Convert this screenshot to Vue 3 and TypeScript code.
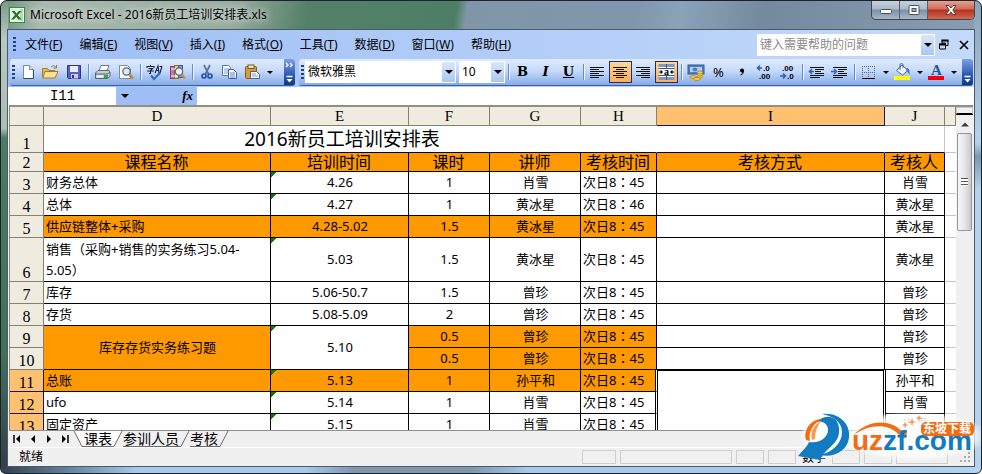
<script setup lang="ts">
import { ref } from 'vue'

interface Cell {
  text: string
  kind: string
  fill?: boolean
  flag?: boolean
  rows?: number
}

interface Row {
  n: number
  cells: Cell[]
  tall?: boolean
}

const menus: [string, string][] = [
  ['文件', 'F'], ['编辑', 'E'], ['视图', 'V'], ['插入', 'I'], ['格式', 'O'],
  ['工具', 'T'], ['数据', 'D'], ['窗口', 'W'], ['帮助', 'H'],
]

const columns = ['D', 'E', 'F', 'G', 'H', 'I', 'J']
const headings = ['课程名称', '培训时间', '课时', '讲师', '考核时间', '考核方式', '考核人']

function line(n: number, topic: string, date: string, hours: string, who: string, exam: string, fill = false, flag = true): Row {
  return {
    n,
    tall: n === 6,
    cells: [
      { text: topic, kind: 'left', fill },
      { text: date, kind: 'mid', fill, flag },
      { text: hours, kind: 'mid', fill },
      { text: who, kind: 'mid', fill },
      { text: exam, kind: n > 10 ? 'exam beside' : 'exam', fill },
      ...(n < 11 ? [{ text: '', kind: 'mid' }] : n === 11 ? [{ text: '', kind: 'active', rows: 3 }] : []),
      { text: who, kind: n > 10 ? 'mid after' : 'mid' },
    ],
  }
}

const rows: Row[] = [
  line(3, '财务总体', '4.26', '1', '肖雪', '次日8：45'),
  line(4, '总体', '4.27', '1', '黄冰星', '次日8：46'),
  line(5, '供应链整体+采购', '4.28-5.02', '1.5', '黄冰星', '次日8：45', true, false),
  line(6, '销售（采购+销售的实务练习5.04-5.05）', '5.03', '1.5', '黄冰星', '次日8：45'),
  line(7, '库存', '5.06-50.7', '1.5', '曾珍', '次日8：45', false, false),
  line(8, '存货', '5.08-5.09', '2', '曾珍', '次日8：45', false, false),
  {
    n: 9,
    cells: [
      { text: '库存存货实务练习题', kind: 'mid', fill: true, rows: 2 },
      { text: '5.10', kind: 'mid', flag: true, rows: 2 },
      { text: '0.5', kind: 'mid', fill: true },
      { text: '曾珍', kind: 'mid', fill: true },
      { text: '次日8：45', kind: 'exam', fill: true },
      { text: '', kind: 'mid' },
      { text: '曾珍', kind: 'mid' },
    ],
  },
  {
    n: 10,
    cells: [
      { text: '0.5', kind: 'mid', fill: true },
      { text: '曾珍', kind: 'mid', fill: true },
      { text: '次日8：45', kind: 'exam', fill: true },
      { text: '', kind: 'mid' },
      { text: '曾珍', kind: 'mid' },
    ],
  },
  line(11, '总账', '5.13', '1', '孙平和', '次日8：45', true),
  line(12, 'ufo', '5.14', '1', '肖雪', '次日8：45'),
  line(13, '固定资产', '5.15', '1', '肖雪', '次日8：45'),
]

// Full-width punctuation is split off so that it can be centred in its square.
const parts = (text: string): string[] => text.split(/([（）：])/).filter(Boolean)
const isMark = (part: string): boolean => '（）：'.includes(part)

const sheets = ['课表', '参训人员', '考核']
const activeSheet = ref(0)
const address = ref('I11')
const formula = ref('')
const question = ref('')
const font = ref('微软雅黑')
const size = ref('10')
const panes = ['a', 'b', 'c', 'c', 'n', 'c', 'c', 'd']
</script>

<template>
  <div class="window">
    <header class="title">
      <svg class="logo" width="16" height="16" viewBox="0 0 16 16">
        <rect x=".5" y=".5" width="15" height="15" fill="#e8f5e4" stroke="#3c8a3c" />
        <rect x="11" y="2" width="3" height="12" fill="#b9d9b4" />
        <path d="M2.5 4h3.200l1.800 2.600L9.800 4h2.800L8.900 8.200l3.800 4.300H9.400L7.300 9.900 4.900 12.500H2l4-4.400z" fill="#1d7a2a" />
      </svg>
      <h1>Microsoft Excel - 2016新员工培训安排表.xls</h1>
      <div class="caption">
        <button aria-label="最小化">
          <svg width="14" height="10"><rect x="1.500" y="4.500" width="11" height="4" rx="1" fill="#fff" stroke="#48525f" /></svg>
        </button>
        <button aria-label="还原">
          <svg width="14" height="12"><rect x="2" y="1.500" width="10" height="9" rx="1" fill="#fff" stroke="#48525f" /><rect x="5" y="4.500" width="4" height="3" fill="#9fb0c2" stroke="#48525f" /></svg>
        </button>
        <button class="shut" aria-label="关闭">
          <svg width="14" height="12"><path d="M2 1.500h3l2 2.500 2-2.500h3L8.800 6l3.200 4.500H9L7 8l-2 2.500H2L5.200 6z" fill="#fff" stroke="#5a3433" /></svg>
        </button>
      </div>
    </header>

    <main class="body">
      <nav class="menu">
        <span class="grip"></span>
        <button v-for="m in menus" :key="m[1]">{{ m[0] }}(<u>{{ m[1] }}</u>)</button>
        <div class="ask">
          <input v-model="question" aria-label="帮助" placeholder="键入需要帮助的问题" />
          <button class="drop" aria-label="展开"><i class="caret"></i></button>
        </div>
        <button class="mini" aria-label="还原窗口">
          <svg width="12" height="12"><path d="M4 1.500h6v5H7.500V4H4zM1.500 5h6v5h-6z" fill="none" stroke="#000" /><path d="M3.500 1.500h7M1 5.500h7" stroke="#000" stroke-width="2" /></svg>
        </button>
        <button class="mini" aria-label="关闭窗口">
          <svg width="12" height="12"><path d="M2 2l8 8M10 2l-8 8" stroke="#000" stroke-width="1.600" /></svg>
        </button>
      </nav>

      <div class="bars">
        <div class="bar">
          <span class="grip"></span>
          <button aria-label="新建"><svg width="16" height="16"><path d="M3.500 1.500h6l4 4v9h-10z" fill="#fff" stroke="#7a8cae" /><path d="M9.500 1.500v4h4" fill="#d4dff3" stroke="#7a8cae" /><path d="M13.500 6v8.500h-10" fill="none" stroke="#33476e" /></svg></button>
          <button aria-label="打开"><svg width="17" height="16"><path d="M.500 13.500v-9h5l1.500 2h6v7z" fill="#e9b75a" stroke="#a77b27" /><path d="M3 7.500h13l-3 6.500H.800z" fill="#ffe394" stroke="#a77b27" /><path d="M9 3c2-2 4-1.500 5 .500M14.500 1v3h-3" fill="none" stroke="#8a7a3a" /></svg></button>
          <button aria-label="保存"><svg width="16" height="16"><path d="M1.500 1.500h13v13h-12l-1-1z" fill="#5d5fc0" stroke="#32347f" /><rect x="4" y="2" width="8" height="6" fill="#e9eefc" /><rect x="5" y="10" width="7" height="4.500" fill="#c9cbe9" /><rect x="6" y="11" width="2" height="3" fill="#32347f" /></svg></button>
          <i class="sep"></i>
          <button aria-label="打印"><svg width="17" height="16"><path d="M5 7l2-5.500h8L13 7z" fill="#fff" stroke="#6f7785" /><path d="M1.500 9L4 6.500h11l1 2v4l-2.500 2h-12z" fill="#c9cfd8" stroke="#5b6370" /><path d="M2 10h11.500L16 8" fill="none" stroke="#5b6370" /><path d="M3 12.500h6" stroke="#fff" stroke-width="1.500" /><rect x="10" y="11" width="4" height="3" fill="#35a83a" /></svg></button>
          <button aria-label="打印预览"><svg width="16" height="16"><path d="M1.500 1.500h8l3 3v10h-11z" fill="#fff" stroke="#7a8cae" /><circle cx="8.500" cy="7.500" r="3.700" fill="#d8eaf6" stroke="#56697c" stroke-width="1.300" /><path d="M11.300 10.500l3.700 4" stroke="#c3853a" stroke-width="2.600" /></svg></button>
          <i class="sep"></i>
          <button aria-label="拼写检查"><svg width="18" height="17"><path d="M1 4V2.500h7V4M4.500 1v1M2.500 4.500h4L4.500 6.500v3H3M1 7h7M9 9l3-7 1 7M10 6.500h3M14 9l2-7M13.500 2.500h2.500" fill="none" stroke="#16224a" stroke-width="1.100" /><path d="M5 11.500l3 3.500 6-6" fill="none" stroke="#2f68c8" stroke-width="2.200" /></svg></button>
          <button aria-label="信息检索"><svg width="17" height="16"><rect x="1.500" y="2.500" width="4" height="12" fill="#c277ab" stroke="#7b437a" /><rect x="5.500" y="1.500" width="4" height="13" fill="#e8cd6d" stroke="#8f7425" /><path d="M2 5h7M2 12h7" stroke="#fff" /><rect x="9.500" y="1.500" width="4" height="12" fill="#8597d5" stroke="#46589a" /><circle cx="10" cy="7.500" r="3.700" fill="#e6f1fa" stroke="#56697c" stroke-width="1.200" /><path d="M12.500 10.500l3.500 4" stroke="#d08c35" stroke-width="2.400" /></svg></button>
          <i class="sep"></i>
          <button aria-label="剪切"><svg width="14" height="16"><path d="M4 1l4.500 9M10 1L5.500 10" stroke="#5f7191" stroke-width="1.700" /><circle cx="4" cy="12" r="2" fill="none" stroke="#2455b0" stroke-width="1.700" /><circle cx="10" cy="12" r="2" fill="none" stroke="#2455b0" stroke-width="1.700" /></svg></button>
          <button aria-label="复制"><svg width="17" height="16"><path d="M1.500 1.500h6l2 2v8h-8z" fill="#fff" stroke="#5674b5" /><path d="M3 5h5M3 7h5M3 9h5" stroke="#7f9bd3" /><path d="M7.500 5.500h5l3 3v6h-8z" fill="#fff" stroke="#3e5da3" /><path d="M9 9h5M9 11h5M9 13h5" stroke="#5b7fc9" /></svg></button>
          <button aria-label="粘贴"><svg width="17" height="16"><rect x="1.500" y="2.500" width="11" height="12" rx="1" fill="#d99b37" stroke="#8a5b16" /><rect x="4" y="1" width="6" height="3.500" fill="#f2e3a6" stroke="#6f6032" /><path d="M6.500 7.500h6l3 3v4h-9z" fill="#fff" stroke="#50618c" /><path d="M8 10h4M8 12h6" stroke="#7f95c4" /></svg></button>
          <button class="slim" aria-label="粘贴选项"><i class="caret"></i></button>
          <button class="more" aria-label="更多按钮"><svg width="9" height="24"><path d="M1 3l2 2-2 2M5 3l2 2-2 2M1.500 16.500h6" fill="none" stroke="#fff" stroke-width="1.300" /><path d="M1.500 19h6l-3 3.500z" fill="#fff" /></svg></button>
        </div>

        <div class="bar wide">
          <span class="grip"></span>
          <label class="pick face"><select v-model="font" aria-label="字体"><option>微软雅黑</option></select><span class="drop"><i class="caret"></i></span></label>
          <label class="pick size"><select v-model="size" aria-label="字号"><option>10</option></select><span class="drop"><i class="caret"></i></span></label>
          <i class="sep"></i>
          <button class="letter" aria-label="加粗"><b>B</b></button>
          <button class="letter" aria-label="倾斜"><b><em>I</em></b></button>
          <button class="letter" aria-label="下划线"><b><u>U</u></b></button>
          <i class="sep"></i>
          <button aria-label="左对齐"><svg width="15" height="13"><path d="M0 1.500h14M0 3.500h9M0 5.500h14M0 7.500h9M0 9.500h14M0 11.500h9" stroke="#111" /></svg></button>
          <button class="on" aria-label="居中"><svg width="15" height="13"><path d="M0 1.500h14M3 3.500h8M0 5.500h14M3 7.500h8M0 9.500h14M3 11.500h8" stroke="#111" /></svg></button>
          <button aria-label="右对齐"><svg width="15" height="13"><path d="M0 1.500h14M5 3.500h9M0 5.500h14M5 7.500h9M0 9.500h14M5 11.500h9" stroke="#111" /></svg></button>
          <button class="on" aria-label="合并及居中"><svg width="17" height="16"><rect x="1" y="1" width="15" height="14" fill="#fff" /><path d="M.500 1.500h16M.500 14.500h16" stroke="#7f98c8" stroke-width="3" /><path d="M.500 4.500h16M.500 11.500h16M8.500 0v4M8.500 12v4" stroke="#3d5a94" /><path d="M1 8h3M3 6.500l1.500 1.500L3 9.500zM16 8h-3M14 6.500L12.500 8 14 9.500z" stroke="#111" /><text x="6" y="11" font-family="Liberation Serif" font-size="10" font-weight="700">a</text></svg></button>
          <i class="sep"></i>
          <button aria-label="货币样式"><svg width="18" height="17"><rect x="1" y="1" width="16" height="9" fill="#4f7fc4" stroke="#315994" /><rect x="3" y="3" width="12" height="5" fill="#b7cdec" /><ellipse cx="8" cy="5.500" rx="2.500" ry="2" fill="#4f7fc4" /><g fill="#f5cf4c" stroke="#a87b1c" stroke-width=".700"><ellipse cx="13" cy="12.500" rx="2.800" ry="1.500" /><ellipse cx="13" cy="10.500" rx="2.800" ry="1.500" /><ellipse cx="13" cy="8.500" rx="2.800" ry="1.500" /><ellipse cx="6" cy="13" rx="3.500" ry="1.300" /><ellipse cx="10" cy="15" rx="3.500" ry="1.500" /></g></svg></button>
          <button class="sans">%</button>
          <button aria-label="千位分隔样式"><svg width="6" height="8"><circle cx="3" cy="2.500" r="2" /><path d="M5 2.500c0 2.500-1 4-3.500 5l-.300-.500C3 6 3.500 5 3 3z" /></svg></button>
          <button aria-label="增加小数位数"><svg width="17" height="16"><path d="M2 4h4M4 1.500L1.500 4 4 6.500" fill="none" stroke="#2a5fc0" stroke-width="1.500" /><text x="7" y="7" class="dig">.0</text><text x="3" y="15" class="dig">.00</text></svg></button>
          <button aria-label="减少小数位数"><svg width="17" height="16"><text x="3" y="7" class="dig">.00</text><path d="M1 12h5M4 9.500L6.500 12 4 14.500" fill="none" stroke="#2a5fc0" stroke-width="1.500" /><text x="8" y="15" class="dig">.0</text></svg></button>
          <i class="sep"></i>
          <button aria-label="减少缩进量"><svg width="17" height="15"><path d="M2 2.500h14M7 4.500h9M7 6.500h6M7 8.500h9M2 10.500h14M2 12.500h10" stroke="#111" /><path d="M6 6.500H2M4 4L1.500 6.500 4 9" fill="none" stroke="#2a5fc0" stroke-width="1.500" /></svg></button>
          <button aria-label="增加缩进量"><svg width="17" height="15"><path d="M2 2.500h14M7 4.500h9M7 6.500h6M7 8.500h9M2 10.500h14M2 12.500h10" stroke="#111" /><path d="M0 6.500h4M3 4l2.500 2.500L3 9" fill="none" stroke="#2a5fc0" stroke-width="1.500" /></svg></button>
          <i class="sep"></i>
          <button aria-label="边框"><svg width="15" height="15"><path d="M1 1.500h13M1 7.500h13M1.500 1v12M7.500 1v12M13.500 1v12" stroke="#55627c" stroke-dasharray="1 1" /><path d="M1 13.500h13" stroke="#000" /></svg></button>
          <button class="slim" aria-label="边框选项"><i class="caret"></i></button>
          <button aria-label="填充颜色"><svg width="17" height="18"><path d="M2.500 7.500L8 2l6 5.500L8.500 12z" fill="#f4f7fc" stroke="#4a5f88" /><path d="M6 7V2c0-2 3-2 3 0v3" fill="none" stroke="#4a5f88" /><path d="M12 5c3 0 4 2 3.500 7-1-2-1.500-3-3-4" fill="#3f74ca" /><rect y="13" width="16" height="4" fill="#ff0" /></svg></button>
          <button class="slim" aria-label="填充选项"><i class="caret"></i></button>
          <button aria-label="字体颜色"><svg width="17" height="18"><text x="3" y="12" font-family="Liberation Serif" font-size="15" font-weight="700" fill="#2b4f94">A</text><rect y="13" width="16" height="4" fill="#f00010" /></svg></button>
          <button class="slim" aria-label="字体颜色选项"><i class="caret"></i></button>
          <button class="more" aria-label="更多格式"><svg width="9" height="24"><path d="M1.500 16.500h6" stroke="#fff" stroke-width="1.300" /><path d="M1.500 19h6l-3 3.500z" fill="#fff" /></svg></button>
        </div>
      </div>

      <div class="formula">
        <input v-model="address" class="name" aria-label="名称框" />
        <div class="fx"><button aria-label="名称列表"><i class="caret"></i></button><button class="fn"><em>fx</em></button></div>
        <input v-model="formula" class="entry" aria-label="编辑栏" />
      </div>

      <section class="sheet">
        <div class="view">
          <table>
            <colgroup>
              <col class="w-no" /><col class="w-d" /><col class="w-e" /><col class="w-f" /><col class="w-g" /><col class="w-h" /><col /><col class="w-j" /><col class="w-k" />
            </colgroup>
            <thead>
              <tr class="letters">
                <th></th>
                <th v-for="c in columns" :key="c" :class="{ lit: c === 'I' }">{{ c }}</th>
                <th></th>
              </tr>
            </thead>
            <tbody>
              <tr class="banner">
                <th>1</th>
                <td colspan="5" class="caption-cell">2016新员工培训安排表</td>
                <td></td>
                <td class="soft"></td>
                <td class="edge"></td>
              </tr>
              <tr class="heads">
                <th>2</th>
                <td v-for="h in headings" :key="h" class="fill">{{ h }}</td>
                <td class="edge"></td>
              </tr>
              <tr v-for="r in rows" :key="r.n" :class="{ tall: r.tall }">
                <th :class="{ lit: r.n > 10 }">{{ r.n }}</th>
                <td v-for="(c, i) in r.cells" :key="i" :rowspan="c.rows ?? 1" :class="[c.kind, { fill: c.fill, flag: c.flag }]"><span v-for="(p, k) in parts(c.text)" :key="k" :class="{ punct: isMark(p) }">{{ p }}</span></td>
                <td class="edge"></td>
              </tr>
            </tbody>
          </table>
        </div>
        <div class="scroll">
          <div class="split"></div>
          <button class="up" aria-label="向上滚动"><svg width="8" height="5"><path d="M0 4.500L4 .500l4 4z" fill="#3c3c3c" /></svg></button>
          <div class="thumb"><i></i></div>
        </div>
      </section>

      <div class="tabs">
        <div class="steps">
          <button aria-label="第一张"><svg width="8" height="8"><path d="M1 0v8" stroke="#000" stroke-width="1.500" /><path d="M7 0v8L3 4z" /></svg></button>
          <button aria-label="上一张"><svg width="8" height="8"><path d="M6 0v8L2 4z" /></svg></button>
          <button aria-label="下一张"><svg width="8" height="8"><path d="M2 0v8l4-4z" /></svg></button>
          <button aria-label="最后一张"><svg width="8" height="8"><path d="M7 0v8" stroke="#000" stroke-width="1.500" /><path d="M1 0v8l4-4z" /></svg></button>
        </div>
        <svg class="slash" width="11" height="16"><path d="M1 0h10v16H9z" fill="#fff" /><path d="M1 0l8 15.500h2" fill="none" stroke="#6b6b6b" /></svg>
        <template v-for="(s, i) in sheets" :key="s">
          <button class="tab" :class="{ current: i === activeSheet }" @click="activeSheet = i">{{ s }}</button>
          <svg class="slash" width="11" height="16"><path v-if="i === activeSheet" d="M0 0h10L2 16H0z" fill="#fff" /><path d="M0 15.500h2L10 0" fill="none" stroke="#6b6b6b" /></svg>
        </template>
      </div>

      <footer class="status">
        <span class="ready">就绪</span>
        <span v-for="(p, i) in panes" :key="i" class="pane" :class="p">{{ p === 'n' ? '数字' : '' }}</span>
        <svg width="12" height="12"><path d="M10 1v2M6 5v2M10 5v2M2 9v2M6 9v2M10 9v2" stroke="#aaa" stroke-width="2" /></svg>
      </footer>
    </main>

    <a class="mark" href="#" aria-label="uzzf.com 东坡下载">
      <svg width="190" height="62" viewBox="0 0 190 62">
        <defs>
          <radialGradient id="halo"><stop offset=".500" stop-color="#fff" stop-opacity=".950" /><stop offset=".800" stop-color="#fff" stop-opacity=".750" /><stop offset="1" stop-color="#fff" stop-opacity="0" /></radialGradient>
        </defs>
        <ellipse cx="122" cy="32" rx="76" ry="25" fill="url(#halo)" />
        <circle cx="35" cy="31" r="25" fill="url(#halo)" />
        <path d="M25 18C38 7 50 15 48 29C46 42 33 45 29 56L7 52C12 46 16 43 18 38C29 40 37 33 37 26C37 20 32 16 25 18z" fill="#137bc2" />
        <path d="M31 10C48 8 60 20 58 34C56 47 43 54 29 51C42 48 51 39 51 28C51 18 42 12 31 10z" fill="#137bc2" />
        <path d="M15 36C12 26 20 15 31 15C23 19 17 27 19 37z" fill="#f36c12" />
        <path d="M21 36C19 29 22 21 30 17C26 23 24 28 24 35z" fill="#f79a50" />
        <path d="M63 31C77 15 102 14 114 31L108 31C97 18 77 21 63 31z" fill="#f36c12" />
        <path d="M108 31l8-5-1 8z" fill="#f36c12" />
        <text x="61" y="46" class="brand"><tspan fill="#f36c12">uz</tspan><tspan fill="#137bc2">zf.com</tspan></text>
        <g fill="#f79a60"><path d="M121 14l1 3 3 1-3 1-1 3-1-3-3-1 3-1z" /><path d="M128 11l1 2 2 1-2 1-1 2-1-2-2-1 2-1z" /><path d="M114 18l1 2 2 1-2 1-1 2-1-2-2-1 2-1z" /></g>
        <rect x="130" y="18" width="53" height="14" rx="5" fill="#f36c12" />
        <text x="132" y="29" class="zh">东坡下载</text>
      </svg>
    </a>
  </div>
</template>

<style>
body {
  margin: 0;
}
</style>

<style scoped>
* {
  box-sizing: border-box;
}
.window {
  position: relative;
  display: flex;
  flex-direction: column;
  height: 100vh;
  overflow: hidden;
  padding: 0 6px 6px;
  border: 1px solid #1c2226;
  border-radius: 7px 7px 6px 6px;
  font: 12px/16px "Noto Sans", "Noto Sans CJK SC", sans-serif;
  color: #000;
  background:
    linear-gradient(#8aa3ba, #b5d3ee 30%, #7c98b2 33%, #b5d3ee 40%, #b5d3ee) right / 7px 100% no-repeat,
    linear-gradient(90deg, #2f4050, #6f8ea8 8%, #a9caea 14%, #a9caea 31%, #7e97ad 36%, #7e97ad 48%, #a9caea 54%, #a9caea 84%, #b5d3ee) bottom / 100% 7px no-repeat,
    linear-gradient(#7d9a8c, #b9c8c0 8%, #a9bdb4 27%, #4c7a65 29%, #446f5b 75%, #303c48) left / 7px 100% no-repeat,
    linear-gradient(100deg, #6b8f7e, #a9b9ae 4%, #98ab9f 22%, #548069 29%, #4d7f66 43%, #8096a8 44%, #7f96ad 60%, #8aa3b8 64%, #75899e 72%, #8fa5ba 100%);
}
button,
input,
select {
  margin: 0;
  padding: 0;
  border: 0;
  background: none;
  color: inherit;
  font: inherit;
  outline: 0;
  appearance: none;
}
button {
  display: flex;
  align-items: center;
  justify-content: center;
  white-space: nowrap;
}
svg {
  flex: none;
}

.title {
  display: flex;
  align-items: center;
  flex: none;
  height: 28px;
  padding-left: 2px;
}
h1 {
  flex: 1;
  margin: 0 0 0 5px;
  font-size: 12px;
  font-weight: 400;
  text-shadow: 0 0 6px #e3ebe5, 0 0 8px #d4ded7;
}
.caption {
  display: flex;
  align-self: flex-start;
  height: 19px;
  border: 1px solid #3c4753;
  border-top: 0;
  border-radius: 0 0 5px 5px;
  overflow: hidden;
  background: linear-gradient(#c5d1dd, #aab9c9 45%, #7d90a5 50%, #a6b8ca);
}
.caption button {
  width: 28px;
  border-right: 1px solid #56616d;
}
.caption .shut {
  width: 46px;
  border: 0;
  background: linear-gradient(#e4a193, #d06a58 45%, #b5321c 50%, #d2684f);
}

.body {
  display: flex;
  flex: 1;
  flex-direction: column;
  min-height: 0;
  border: 1px solid #4a5a66;
  background: #f0f0f0;
}
.menu {
  display: flex;
  align-items: center;
  flex: none;
  gap: 17px;
  height: 29px;
  padding: 0 4px 0 5px;
  background: linear-gradient(90deg, #9ebef5, #c4dafa);
}
.grip {
  flex: none;
  width: 3px;
  height: 15px;
  background: repeating-linear-gradient(#27417c 0 2px, transparent 2px 4px);
}
.menu > .grip {
  margin-right: -8px;
}
.ask {
  display: flex;
  width: 178px;
  height: 22px;
  margin-left: auto;
  background: #fff;
}
.ask input {
  flex: 1;
  min-width: 0;
  padding-left: 3px;
}
.ask input::placeholder {
  color: #8a8a8a;
}
.drop {
  display: flex;
  align-items: center;
  justify-content: center;
  width: 13px;
  margin: 1px;
  background: linear-gradient(#d9e7fc, #a9c7f2);
}
.caret {
  width: 0;
  border: 4px solid transparent;
  border-top-color: #000;
  border-bottom: 0;
}
.mini {
  margin-left: -14px;
}
.mini + .mini {
  margin-left: -9px;
}

.bars {
  display: flex;
  flex: none;
  height: 28px;
  gap: 4px;
  padding: 0 1px 1px 2px;
  background: linear-gradient(90deg, #9ebef5, #c4dafa);
}
.bar {
  display: flex;
  align-items: center;
  border-radius: 3px;
  overflow: hidden;
  border-bottom: 1px solid #3b619c;
  background: linear-gradient(#e0ebfd, #c6dafb 45%, #86abe6);
}
.bar.wide {
  flex: 1;
}
.bar .grip {
  margin: 0 1px 0 2px;
}
.bar button {
  flex: none;
  width: 23px;
  height: 22px;
}
.bar .slim {
  width: 11px;
}
.slim .caret {
  border-width: 3px;
  border-bottom: 0;
}
.bar .more {
  width: 11px;
  height: 27px;
  margin-left: auto;
  background: linear-gradient(#7ba0e5, #2e58ae 60%, #0b3488);
}
.bar:not(.wide) .more {
  margin-left: 9px;
}
.sep {
  flex: none;
  width: 1px;
  height: 16px;
  margin: 0 2px 0 3px;
  background: #6a8ccb;
  box-shadow: 1px 0 #eef4ff;
}
.pick {
  display: flex;
  flex: none;
  height: 22px;
  background: #fff;
}
.face {
  width: 151px;
  margin-right: 3px;
}
.size {
  width: 46px;
}
.pick select {
  flex: 1;
  min-width: 0;
  padding-left: 3px;
}
.bar .letter {
  font: 13px/20px "DejaVu Serif", serif;
}
.bar .on {
  border: 1px solid #1b2e79;
  background: linear-gradient(#ffd79a, #ffad55);
}
.bar .sans {
  font-size: 13px;
}
.dig {
  font: 700 8px "Liberation Sans", sans-serif;
}

.formula {
  display: flex;
  flex: none;
  height: 18px;
  padding: 0 1px;
  background: #fff;
}
.name {
  width: 107px;
  font: 14px/18px "Liberation Mono", monospace;
  text-align: center;
}
.fx {
  display: flex;
  justify-content: space-between;
  width: 81px;
  padding: 0 4px 0 5px;
  background: #9ebef5;
}
.fn {
  font: 700 13px/16px "Liberation Serif", serif;
}
.entry {
  flex: 1;
}

.sheet {
  display: flex;
  flex: 1;
  min-height: 0;
  margin: 0 1px;
  border-top: 2px solid #8f8f86;
  border-left: 1px solid #8f8f86;
}
.view {
  flex: 1;
  min-width: 0;
  overflow: hidden;
  background: #fff;
}
table {
  width: 100%;
  table-layout: fixed;
  border-collapse: separate;
  border-spacing: 0;
}
.w-no { width: 34px; }
.w-d { width: 227px; }
.w-e { width: 138px; }
.w-f { width: 81px; }
.w-g { width: 91px; }
.w-h { width: 76px; }
.w-j { width: 60px; }
.w-k { width: 11px; }
th {
  padding: 0;
  border: solid #85836f;
  border-width: 0 1px 1px 0;
  background: #efebde;
  font: 16px/17px "Liberation Serif", serif;
  vertical-align: bottom;
}
.letters th {
  height: 19px;
  line-height: 18px;
  font-size: 15px;
}
th.lit {
  border-color: #1b1464;
  background: #ffc06f;
}
td {
  height: 22px;
  padding: 0 1px 0 2px;
  border: solid #000;
  border-width: 0 1px 1px 0;
  font-size: 13px;
  line-height: 21px;
  text-align: center;
  vertical-align: middle;
}
.tall td {
  height: 44px;
}
td.left,
td.exam {
  text-align: left;
}
.punct {
  font-family: "Noto Sans CJK TC", sans-serif;
  line-height: 16px;
}
.fill {
  background: #ff9900;
}
.flag {
  background-image: linear-gradient(135deg, #107c10 4px, transparent 4px);
}
.banner td {
  height: 27px;
  border-right-color: transparent;
  font-size: 19px;
  line-height: 26px;
}
.banner .caption-cell {
  padding-right: 18px;
}
.banner .soft {
  border-right-color: #c6c6c6;
}
.heads td {
  height: 19px;
  padding: 0 2px 0 1px;
  font-size: 16px;
  line-height: 18px;
}
td.edge {
  padding: 0;
  border-right: 0;
  border-bottom-color: #c6c6c6;
}
td.beside {
  border-right-color: #fff;
  box-shadow: inset -1px 0 #000;
}
td.active {
  border-right-color: #fff;
  box-shadow: inset 0 1px #000, inset 1px 0 #000, inset -1px 0 #000;
}
td.after {
  box-shadow: inset 1px 0 #000;
}
.scroll {
  display: flex;
  flex-direction: column;
  width: 17px;
  background: #f0f0f0;
}
.split {
  height: 8px;
  border: 1px solid #c8c8c8;
  border-bottom: 2px solid #000;
}
.up {
  height: 18px;
}
.thumb {
  display: flex;
  align-items: center;
  justify-content: center;
  height: 98px;
  margin: 0 1px;
  border: 1px solid #979797;
  border-radius: 2px;
  background: linear-gradient(90deg, #f6f6f6, #e6e6e8 50%, #c9cacd);
}
.thumb i {
  width: 7px;
  height: 8px;
  background: repeating-linear-gradient(#555 0 1px, #fff 1px 3px);
}

.tabs {
  display: flex;
  flex: none;
  height: 17px;
  margin: 0 1px;
  border-top: 1px solid #8f8f8f;
  background: #f0f0f0;
}
.steps {
  display: flex;
}
.steps button {
  width: 16px;
}
.tab {
  height: 16px;
  border-bottom: 1px solid #6b6b6b;
  font-size: 14px;
  line-height: 15px;
}
.tab.current {
  background: #fff;
}
.slash {
  height: 16px;
}
.status {
  display: flex;
  align-items: center;
  flex: none;
  gap: 4px;
  height: 19px;
  padding: 0 3px 0 11px;
  border-top: 1px solid #fff;
}
.ready {
  flex: 1;
}
.pane {
  width: 28px;
  height: 14px;
  border: 1px solid #cfcfcf;
  line-height: 14px;
}
.pane.a { width: 34px; }
.pane.b { width: 112px; }
.pane.d { width: 52px; margin-right: 7px; }
.pane.n { border-color: transparent; padding-left: 1px; }

.mark {
  position: absolute;
  right: 0;
  bottom: 7px;
  display: flex;
}
.brand {
  font: 700 28px "Liberation Sans", sans-serif;
}
.zh {
  fill: #fff;
  font: 700 12px "Noto Sans CJK SC", sans-serif;
}
</style>
